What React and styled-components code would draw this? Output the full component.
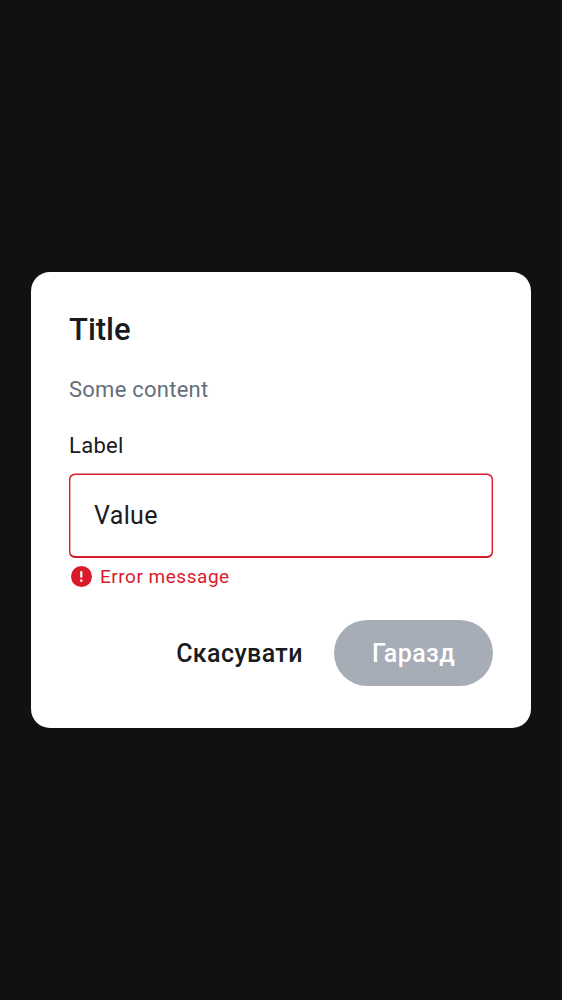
import React from 'react';
import styled, { createGlobalStyle } from 'styled-components';

const GlobalStyle = createGlobalStyle`
  *, *::before, *::after { box-sizing: border-box; }
  body { margin: 0; background: #111111; }
`;

const Scrim = styled.main`
  min-height: 1000px;
  display: flex;
  align-items: center;
  justify-content: center;
  background: #111111;
  font-family: Roboto, sans-serif;
  color: #1a1b21;
`;

const Dialog = styled.section`
  width: 500px;
  height: 456px;
  padding: 39px 38px 38px;
  border-radius: 19px;
  background: #ffffff;
`;

const Title = styled.h1`
  margin: 0;
  font-size: 31px;
  line-height: 38px;
  font-weight: 500;
`;

const Content = styled.p`
  margin: 26px 0 0;
  font-size: 22px;
  line-height: 30px;
  letter-spacing: 0.25px;
  color: #646e7a;
`;

const Label = styled.label`
  display: block;
  margin-top: 26px;
  font-size: 22px;
  line-height: 30px;
  letter-spacing: 0.3px;
`;

const Field = styled.input`
  display: block;
  width: 424px;
  height: 84px;
  margin-top: 13px;
  padding: 0 24px;
  border: 1px solid #d91a2a;
  border-bottom-width: 2px;
  border-radius: 6px;
  box-shadow: 0 -0.5px 0 #d91a2a, inset 0.4px 0 0 #d91a2a, inset -0.4px 0 0 #d91a2a;
  outline: none;
  background: #ffffff;
  color: #1a1b21;
  font: 400 25px/38px Roboto, sans-serif;
  letter-spacing: 0.35px;
`;

const ErrorRow = styled.div`
  display: flex;
  align-items: center;
  gap: 8px;
  height: 25px;
  margin-top: 6px;
  padding-left: 2px;
  color: #d91a2a;
  font-size: 19px;
  letter-spacing: 0.52px;
`;

const Actions = styled.div`
  display: flex;
  justify-content: flex-end;
  margin-top: 31px;
`;

const Button = styled.button`
  width: ${({ $filled }) => ($filled ? '159px' : '190px')};
  height: 66px;
  padding: ${({ $filled }) => ($filled ? '1px 0 0' : '1px 0 0 1px')};
  border: 0;
  border-radius: 33px;
  background: ${({ $filled }) => ($filled ? '#a6adb7' : 'transparent')};
  color: ${({ $filled }) => ($filled ? '#ffffff' : '#1a1b21')};
  font: 500 25px/38px Roboto, sans-serif;
  letter-spacing: 0.4px;
`;

const ErrorIcon = () => (
  <svg width="21" height="21" viewBox="0 0 21 21" aria-hidden="true">
    <circle cx="10.5" cy="10.5" r="10.5" fill="#d91a2a" />
    <path d="M10.3 5.2v6.3M10.3 13.5v2.2" stroke="#ffffff" strokeWidth="2.2" />
  </svg>
);

export default function App() {
  return (
    <>
      <GlobalStyle />
      <Scrim>
        <Dialog role="dialog" aria-labelledby="title">
          <Title id="title">Title</Title>
          <Content>Some content</Content>
          <Label htmlFor="value">Label</Label>
          <Field id="value" defaultValue="Value" />
          <ErrorRow><ErrorIcon /><span>Error message</span></ErrorRow>
          <Actions>
            <Button>Скасувати</Button>
            <Button $filled>Гаразд</Button>
          </Actions>
        </Dialog>
      </Scrim>
    </>
  );
}
